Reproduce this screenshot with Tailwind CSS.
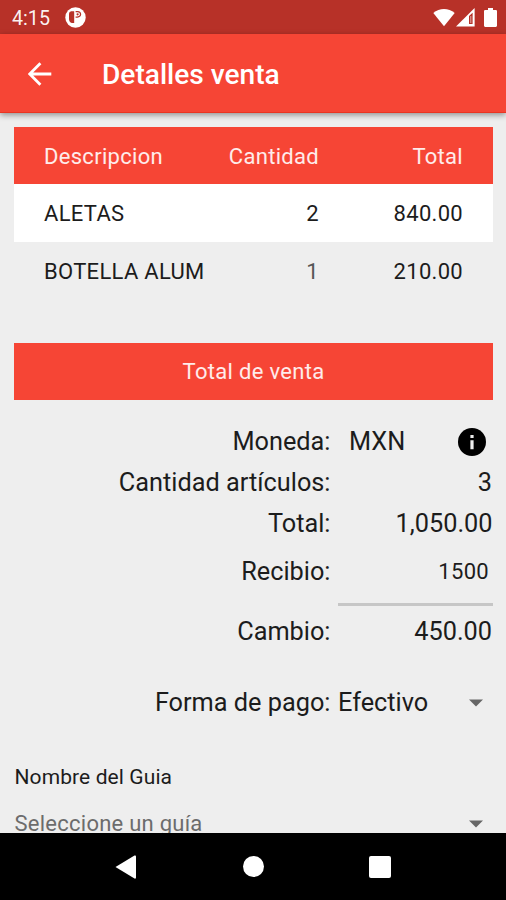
<!DOCTYPE html>
<html lang="es">
<head>
<meta charset="utf-8">
<title>Detalles venta</title>
<script src="https://cdn.jsdelivr.net/npm/@tailwindcss/browser@4"></script>
</head>
<body class="bg-[#eeeeee]">
<div class="w-[506px] h-[900px] flex flex-col overflow-hidden bg-[#eeeeee] text-[#1c1c1c] font-['Roboto',sans-serif] whitespace-nowrap">
  <div class="h-[34px] shrink-0 bg-[#b73128] flex items-center pl-3 pr-[9px] text-white">
    <span class="text-[19.7px] leading-[32px] pt-[4px] w-[53px] text-white/95">4:15</span>
    <svg class="w-[21px] h-[21px]" viewBox="0 0 21 21"><circle cx="10.5" cy="10.5" r="10.2" fill="#fff"/><path d="M6.2 4.2H9.2V16H6.8Q4.2 15.5 4 12V6.5Q4.2 4.4 6.2 4.2Z" fill="#b73128"/><path d="M10.6 4.6H12.6Q15.6 4.8 15.6 7.3Q15.6 9.8 12.4 10.1H10.6" fill="none" stroke="#b73128" stroke-width="1.2"/><circle cx="12.6" cy="7.3" r="1.1" fill="#b73128"/></svg>
    <div class="ml-auto pt-[1px] flex items-center">
      <svg class="w-[22px] h-[19px]" viewBox="0 0 22 19"><path d="M0.3 5C6.5-.3 15.5-.3 21.7 5L11 18.3Z" fill="#fff"/></svg>
      <svg class="ml-[1px] w-[19px] h-[19px]" viewBox="0 0 19 19"><path d="M0 18.6L18.6 0V18.6Z" fill="#fff"/><path d="M13 8L16.6 4.8V16H13Z" fill="#b73128"/><path d="M14.8 8V15" stroke="#fff" stroke-width=".6"/></svg>
      <svg class="ml-[9px] w-[13px] h-[19px]" viewBox="0 0 13 20" preserveAspectRatio="none"><path d="M1.2 2H4V0H9V2H11.8Q13 2 13 3.2V18.8Q13 20 11.8 20H1.2Q0 20 0 18.8V3.2Q0 2 1.2 2Z" fill="#fff"/></svg>
    </div>
  </div>
  <header class="h-[79px] shrink-0 bg-[#f64535] flex items-center pl-[28px] text-white shadow-[0_2px_6px_rgba(0,0,0,0.4)] border-b border-[#ea3522]">
    <svg class="w-[24px] h-[24px] mt-[1px]" viewBox="0 0 24 24"><path d="M23.3 12H2.5M12.4 1.2L1.7 12L12.4 22.8" fill="none" stroke="#fff" stroke-width="2.8"/></svg>
    <h1 class="ml-[50px] text-[28.1px] font-medium pt-[5px]">Detalles venta</h1>
  </header>
  <main class="h-[720px] shrink-0 overflow-hidden pt-[14px] px-[14px]">
    <table class="w-[479px] table-fixed text-[22px] tracking-[0.3px]">
      <thead>
        <tr class="h-[57px] bg-[#f64535] text-white/90">
          <th class="w-[192px] pl-[30px] pt-[1px] text-left font-normal">Descripcion</th>
          <th class="w-[113px] pt-[1px] text-right font-normal">Cantidad</th>
          <th class="pr-[30px] pt-[1px] text-right font-normal">Total</th>
        </tr>
      </thead>
      <tbody>
        <tr class="h-[58px] bg-white"><td class="pl-[30px]">ALETAS</td><td class="text-right">2</td><td class="pr-[30px] text-right">840.00</td></tr>
        <tr class="h-[58px]"><td class="pl-[30px]">BOTELLA ALUM</td><td class="text-right text-[#555]">1</td><td class="pr-[30px] text-right">210.00</td></tr>
      </tbody>
    </table>
    <div class="mt-[43px] w-[479px] h-[57px] pb-[1px] bg-[#f64535] text-white/90 text-[22px] tracking-[0.3px] flex items-center justify-center">Total de venta</div>
    <section class="mt-[21px] w-[479px] grid grid-cols-[316.5px_155px] gap-x-[7.5px] text-[25.3px]">
      <div class="h-[42px] flex items-center justify-end">Moneda:</div>
      <div class="h-[42px] flex items-center justify-between pl-[11px] pr-[7px]"><span>MXN</span>
        <svg class="w-[28px] h-[28px]" viewBox="0 0 28 28"><circle cx="14" cy="14" r="14" fill="#000"/><path d="M12.4 7h3.2v3.1h-3.2zM12.4 12.2h3.2v9h-3.2z" fill="#eee"/></svg>
      </div>
      <div class="h-[40px] flex items-center justify-end">Cantidad artículos:</div>
      <div class="h-[40px] pr-[1px] flex items-center justify-end">3</div>
      <div class="h-[41px] flex items-center justify-end">Total:</div>
      <div class="h-[41px] pr-[0.5px] flex items-center justify-end">1,050.00</div>
      <div class="h-[62px] pt-[12px] flex items-start justify-end leading-[32px]">Recibio:</div>
      <div class="h-[62px] pt-[12px] pr-[4px] flex items-start justify-end border-b-[3px] border-[#c6c6c6] text-[22px] leading-[32px] tracking-[0.3px]">1500</div>
      <div class="h-[51px] flex items-center justify-end">Cambio:</div>
      <div class="h-[51px] pr-[1px] flex items-center justify-end">450.00</div>
    </section>
    <section class="mt-[26px] w-[479px] h-[40px] grid grid-cols-[316.5px_155px] gap-x-[7.5px] text-[25.3px] items-center">
      <div class="text-right">Forma de pago:</div>
      <div class="flex items-center justify-between pr-[10px]"><span>Efectivo</span>
        <svg class="w-[14px] h-[8px]" viewBox="0 0 14 8"><path d="M0 .5H14L7 7.5Z" fill="#666"/></svg>
      </div>
    </section>
    <div class="mt-[39px] h-[30px] pl-[0.5px] leading-[30px] text-[21px] tracking-[0.1px]">Nombre del Guia</div>
    <div class="mt-[17px] w-[479px] h-[30px] pl-[0.5px] leading-[30px] flex items-center justify-between pr-[10px] text-[22px] tracking-[0.25px] text-[#6c6c6c]"><span>Seleccione un guía</span>
      <svg class="w-[14px] h-[8px]" viewBox="0 0 14 8"><path d="M0 .5H14L7 7.5Z" fill="#666"/></svg>
    </div>
  </main>
  <nav class="h-[67px] shrink-0 bg-black flex items-center">
    <svg class="ml-[115px] w-[21px] h-[24px]" viewBox="0 0 21 24"><path d="M.5 12L19.5 .5Q21 0 21 1.5V22.5Q21 24 19.5 23.5Z" fill="#fff"/></svg>
    <div class="ml-[107px] w-[21px] h-[21px] rounded-full bg-white"></div>
    <div class="ml-[105px] w-[22px] h-[22px] rounded-[2px] bg-white"></div>
  </nav>
</div>
</body>
</html>
